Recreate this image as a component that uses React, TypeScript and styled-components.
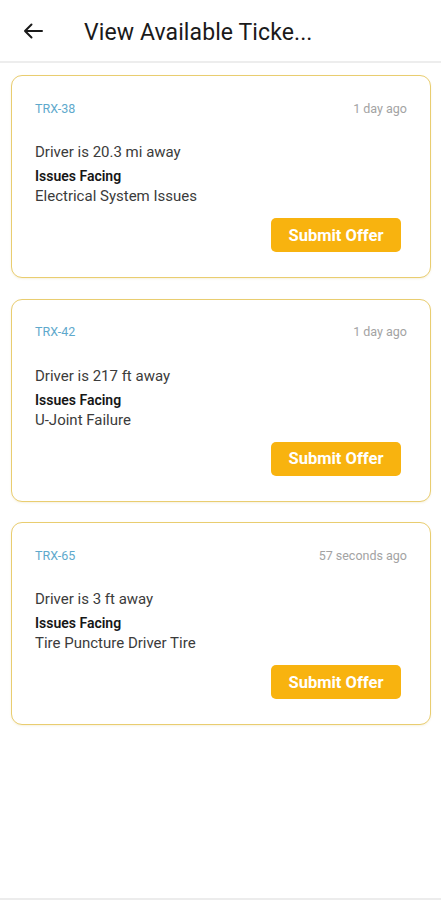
import { FC } from 'react';
import styled, { createGlobalStyle } from 'styled-components';

interface Ticket {
	id: string;
	time: string;
	distance: string;
	issue: string;
}

const tickets: Ticket[] = [
	{ id: 'TRX-38', time: '1 day ago', distance: '20.3 mi', issue: 'Electrical System Issues' },
	{ id: 'TRX-42', time: '1 day ago', distance: '217 ft', issue: 'U-Joint Failure' },
	{ id: 'TRX-65', time: '57 seconds ago', distance: '3 ft', issue: 'Tire Puncture Driver Tire' },
];

const GlobalStyle = createGlobalStyle`
	html, body {
		margin: 0;
		padding: 0;
		background: #ffffff;
	}
	body {
		font-family: Roboto, 'Noto Sans', 'Liberation Sans', sans-serif;
	}
	* {
		box-sizing: border-box;
	}
`;

const BackArrow: FC = () => (
	<svg width="20" height="16" viewBox="0 0 20 16" fill="none">
		<path
			d="M19 8H2M8.5 1.5L2 8l6.5 6.5"
			stroke="#1a1a1a"
			strokeWidth="2"
			strokeLinecap="round"
			strokeLinejoin="round"
		/>
	</svg>
);

const TicketCard: FC<{ ticket: Ticket }> = ({ ticket }) => (
	<Card>
		<CardHead>
			<TicketId>{ticket.id}</TicketId>
			<TimeAgo>{ticket.time}</TimeAgo>
		</CardHead>
		<Distance>Driver is {ticket.distance} away</Distance>
		<IssueLabel>Issues Facing</IssueLabel>
		<IssueText>{ticket.issue}</IssueText>
		<Actions>
			<OfferButton type="button">Submit Offer</OfferButton>
		</Actions>
	</Card>
);

const App: FC = () => {
	return (
		<Screen>
			<GlobalStyle />
			<Header>
				<BackButton type="button" aria-label="Back">
					<BackArrow />
				</BackButton>
				<Title>View Available Ticke...</Title>
			</Header>
			<List>
				{tickets.map((t) => (
					<TicketCard key={t.id} ticket={t} />
				))}
			</List>
			<BottomEdge />
		</Screen>
	);
};

const Screen = styled.div`
	width: 441px;
	height: 900px;
	display: flex;
	flex-direction: column;
	background: #ffffff;
	overflow: hidden;
`;

const Header = styled.header`
	height: 63px;
	flex-shrink: 0;
	display: flex;
	align-items: center;
	padding: 0 0 0 23px;
	border-bottom: 2px solid #ededed;
`;

const BackButton = styled.button`
	border: none;
	background: none;
	padding: 0;
	width: 20px;
	height: 16px;
	display: flex;
	align-items: center;
	margin-top: 1px;
`;

const Title = styled.h1`
	margin: 3px 0 0 41px;
	font-size: 23px;
	font-weight: 400;
	color: #1a1a1a;
	letter-spacing: 0.1px;
	white-space: nowrap;
`;

const List = styled.div`
	flex: 1;
	display: flex;
	flex-direction: column;
	gap: 20.5px;
	padding: 12px 10px 0 11px;
`;

const Card = styled.div`
	border: 1.5px solid #e9cd70;
	border-radius: 11px;
	padding: 24px 23px 25px 23px;
	display: flex;
	flex-direction: column;
	background: #ffffff;
	box-shadow: 0 1px 2px rgba(200, 170, 60, 0.15);
`;

const CardHead = styled.div`
	display: flex;
	justify-content: space-between;
	align-items: center;
	height: 16px;
	font-size: 12.5px;
`;

const TicketId = styled.span`
	color: #5ea9cc;
`;

const TimeAgo = styled.span`
	color: #a3a3a3;
`;

const Distance = styled.div`
	margin-top: 26px;
	font-size: 15px;
	line-height: 20px;
	color: #3b3b3b;
`;

const IssueLabel = styled.div`
	margin-top: 6px;
	font-size: 14px;
	line-height: 16px;
	font-weight: 600;
	color: #161616;
`;

const IssueText = styled.div`
	margin-top: 2px;
	font-size: 15px;
	line-height: 20px;
	color: #3b3b3b;
`;

const Actions = styled.div`
	display: flex;
	justify-content: flex-end;
	margin-top: 12px;
	padding-right: 6px;
`;

const OfferButton = styled.button`
	width: 130px;
	height: 34px;
	border: none;
	border-radius: 5px;
	background: #f8b30f;
	color: #ffffff;
	font-family: Roboto, 'Noto Sans', 'Liberation Sans', sans-serif;
	font-size: 16.5px;
	font-weight: 700;
	cursor: pointer;
`;

const BottomEdge = styled.div`
	height: 2px;
	flex-shrink: 0;
	background: #ececec;
`;

export default App;
